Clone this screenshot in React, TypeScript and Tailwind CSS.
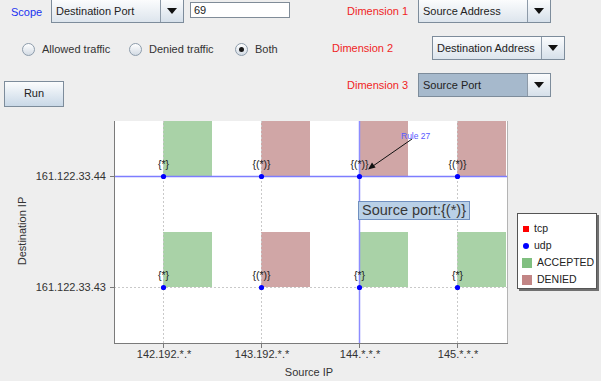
import React from "react";

type ComboProps = {
  text: string;
  width: string;
  selected?: boolean;
};

function Combo({ text, width, selected }: ComboProps) {
  return (
    <div className={`flex h-[24px] border border-[#7d8c9b] ${width}`}>
      <div
        className={
          selected
            ? "flex flex-1 items-center bg-[#a6b9cc] pl-[4px]"
            : "flex flex-1 items-center bg-linear-to-b from-[#fbfcfd] to-[#dde5ed] pl-[4px]"
        }
      >
        {text}
      </div>
      <div className="flex w-[23px] items-center justify-center border-l border-[#8d9aa8] bg-linear-to-b from-[#fbfcfd] to-[#d6e0ea]">
        <svg width="10" height="6" viewBox="0 0 10 6">
          <polygon points="0,0 10,0 5,6" fill="#111" />
        </svg>
      </div>
    </div>
  );
}

function Radio({ label, checked, width }: { label: string; checked?: boolean; width: string }) {
  return (
    <div className={`flex items-center gap-[7px] ${width}`}>
      <div className="flex h-[13px] w-[13px] items-center justify-center rounded-full border border-[#8d9cab] bg-linear-to-b from-white to-[#d3dbe4]">
        {checked ? <div className="h-[5px] w-[5px] rounded-full bg-[#1a1a1a]" /> : null}
      </div>
      <span>{label}</span>
    </div>
  );
}

const cols = [163, 261, 359, 457];
const topRow = ["acc", "den", "den", "den"];
const bottomRow = ["acc", "den", "acc", "acc"];
const xLabels = ["142.192.*.*", "143.192.*.*", "144.*.*.*", "145.*.*.*"];

function Chart() {
  const font = "'Liberation Sans', Arial, sans-serif";
  return (
    <div className="relative h-[271px]">
      <svg width="601" height="271" viewBox="0 110 601 271" className="block" fontFamily={font}>
        <rect x="114" y="121" width="393" height="222" fill="#ffffff" />

        {/* bars */}
        {cols.map((x, i) => (
          <rect
            key={"t" + i}
            x={x}
            y={121}
            width={49}
            height={55}
            fill={topRow[i] === "acc" ? "#a9d2a7" : "#d0a6a6"}
          />
        ))}
        {cols.map((x, i) => (
          <rect
            key={"b" + i}
            x={x}
            y={232}
            width={49}
            height={55}
            fill={bottomRow[i] === "acc" ? "#a9d2a7" : "#d0a6a6"}
          />
        ))}

        {/* grid */}
        {[163, 261, 457].map((x) => (
          <line key={x} x1={x + 0.5} y1={121} x2={x + 0.5} y2={343} stroke="#c9c9c9" strokeDasharray="2 2" />
        ))}
        <line x1="114" y1="287.5" x2="507" y2="287.5" stroke="#c9c9c9" strokeDasharray="2 2" />

        {/* crosshair */}
        <line x1="114" y1="176.5" x2="507" y2="176.5" stroke="#7d7dff" strokeWidth="1.5" />
        <line x1="359.5" y1="121" x2="359.5" y2="343" stroke="#8c8cff" strokeWidth="1.5" />

        {/* axes */}
        <line x1="507.5" y1="121" x2="507.5" y2="343" stroke="#b4b4b4" />
        <line x1="114.5" y1="121" x2="114.5" y2="343.5" stroke="#7a7a7a" />
        <line x1="114" y1="343.5" x2="508" y2="343.5" stroke="#7a7a7a" />
        <line x1="110" y1="176.5" x2="114" y2="176.5" stroke="#7a7a7a" />
        <line x1="110" y1="287.5" x2="114" y2="287.5" stroke="#7a7a7a" />
        {cols.map((x) => (
          <line key={"tk" + x} x1={x + 0.5} y1={344} x2={x + 0.5} y2={348} stroke="#7a7a7a" />
        ))}

        {/* points and labels */}
        {cols.map((x, i) => (
          <g key={"p" + i}>
            <circle cx={x + 0.5} cy={176.5} r="2.6" fill="#0000ff" />
            <circle cx={x + 0.5} cy={287.5} r="2.6" fill="#0000ff" />
            <text x={x + 0.5} y={168} fontSize="10.5" textAnchor="middle" fill="#222">
              {topRow[i] === "acc" ? "{*}" : "{(*)}"}
            </text>
            <text x={x + 0.5} y={279} fontSize="10.5" textAnchor="middle" fill="#222">
              {bottomRow[i] === "acc" ? "{*}" : "{(*)}"}
            </text>
          </g>
        ))}

        {/* annotation */}
        <text x="401" y="139" fontSize="8.5" fill="#5a5aff">
          Rule 27
        </text>
        <line x1="412" y1="139" x2="373" y2="166" stroke="#111" />
        <polygon points="368,169.5 375.6,167.6 372,162.6" fill="#111" />

        {/* tick labels */}
        <text x="106" y="180" fontSize="11" textAnchor="end" fill="#333">
          161.122.33.44
        </text>
        <text x="106" y="291" fontSize="11" textAnchor="end" fill="#333">
          161.122.33.43
        </text>
        {cols.map((x, i) => (
          <text key={"xl" + i} x={x + 1} y={358} fontSize="11" textAnchor="middle" fill="#333">
            {xLabels[i]}
          </text>
        ))}
        <text x="309" y="376" fontSize="11" textAnchor="middle" fill="#333">
          Source IP
        </text>
        <text x="26" y="231" fontSize="11" textAnchor="middle" fill="#333" transform="rotate(-90 26 231)">
          Destination IP
        </text>
      </svg>

      {/* tooltip */}
      <div className="absolute left-[358px] top-[91px] flex h-[19px] w-[112px] items-center justify-center border border-[#7090c0] bg-[#b9d0e7] text-[14.5px] text-[#383838]">
        Source port:{"{(*)}"}
      </div>

      {/* legend */}
      <div className="absolute left-[517px] top-[103px] flex h-[76px] w-[80px] flex-col border border-[#555] bg-white pl-[4px] pt-[6px] text-[10.5px] text-[#222] shadow-[2px_2px_0_#707070]">
        <div className="flex h-[18px] items-center gap-[5px]">
          <div className="ml-[1px] h-[6px] w-[6px] bg-[#ff0000]" />
          <span>tcp</span>
        </div>
        <div className="flex h-[18px] items-center gap-[5px]">
          <div className="ml-[1px] h-[6px] w-[6px] rounded-full bg-[#0000ff]" />
          <span>udp</span>
        </div>
        <div className="flex h-[18px] items-center gap-[5px]">
          <div className="h-[10px] w-[10px] bg-[#80bf80]" />
          <span>ACCEPTED</span>
        </div>
        <div className="flex h-[18px] items-center gap-[5px]">
          <div className="h-[10px] w-[10px] bg-[#c28585]" />
          <span>DENIED</span>
        </div>
      </div>
    </div>
  );
}

export default function App() {
  return (
    <div className="relative h-[381px] w-[601px] overflow-hidden bg-[#eeeeee] font-['Liberation_Sans',Arial,sans-serif] text-[11px] text-[#222]">
      <div className="flex h-[110px]">
        {/* left controls */}
        <div className="w-[300px]">
          <div className="-mt-[1px] flex items-start">
            <div className="ml-[11px] mt-[5px] w-[40px] text-[#1a32f0]">Scope</div>
            <Combo text="Destination Port" width="w-[133px]" />
            <div className="ml-[6px] mt-[3px] flex h-[16px] w-[100px] items-center border border-[#808c98] bg-white pl-[3px]">
              69
            </div>
          </div>
          <div className="ml-[22px] mt-[18px] flex items-center text-[#333]">
            <Radio label="Allowed traffic" width="w-[107px]" />
            <Radio label="Denied traffic" width="w-[106px]" />
            <Radio label="Both" checked width="w-[60px]" />
          </div>
          <button
            type="button"
            className="ml-[4px] mt-[23px] h-[26px] w-[60px] border border-[#7d8c9b] bg-linear-to-b from-[#fbfcfd] to-[#c9d8e7] text-[11px]"
          >
            Run
          </button>
        </div>

        {/* right controls */}
        <div className="flex-1 text-[#f01e1e]">
          <div className="-mt-[1px] flex items-center">
            <div className="ml-[47px] w-[71px]">Dimension 1</div>
            <div className="text-[#222]">
              <Combo text="Source Address" width="w-[133px]" />
            </div>
          </div>
          <div className="mt-[13px] flex items-center">
            <div className="ml-[32px] w-[100px]">Dimension 2</div>
            <div className="text-[#222]">
              <Combo text="Destination Address" width="w-[133px]" />
            </div>
          </div>
          <div className="mt-[13px] flex items-center">
            <div className="ml-[47px] w-[71px]">Dimension 3</div>
            <div className="text-[#222]">
              <Combo text="Source Port" width="w-[133px]" selected />
            </div>
          </div>
        </div>
      </div>
      <Chart />
    </div>
  );
}
